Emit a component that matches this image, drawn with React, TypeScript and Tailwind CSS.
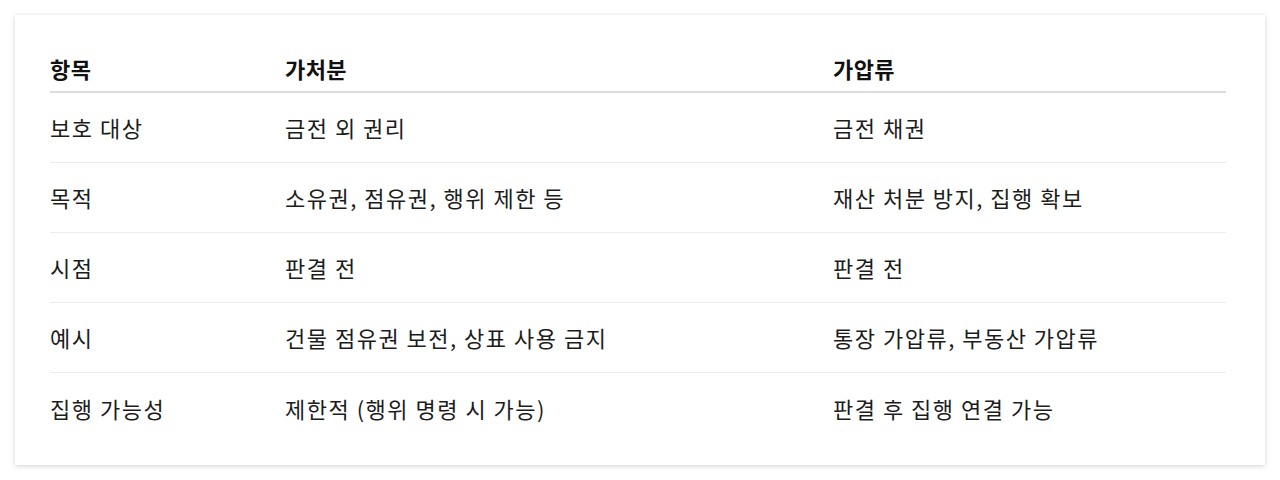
import React from 'react';

const rows = [
  ['보호 대상', '금전 외 권리', '금전 채권'],
  ['목적', '소유권, 점유권, 행위 제한 등', '재산 처분 방지, 집행 확보'],
  ['시점', '판결 전', '판결 전'],
  ['예시', '건물 점유권 보전, 상표 사용 금지', '통장 가압류, 부동산 가압류'],
  ['집행 가능성', '제한적 (행위 명령 시 가능)', '판결 후 집행 연결 가능'],
];

export default function App() {
  return (
    <div className="min-h-[480px] bg-white p-[15px] font-['Noto_Sans_CJK_KR','Noto_Sans',sans-serif]">
      <div className="w-[1250px] h-[450px] bg-white shadow-[0_1px_5px_rgba(0,0,0,0.18)] pl-[35px] pr-[39px] pt-[30px]">
        <div className="grid grid-cols-[235px_548px_1fr] h-[48px] items-center border-b-2 border-[#dcdcdc] text-[22px] tracking-[0.4px] font-bold text-[#111]">
          <div>항목</div>
          <div>가처분</div>
          <div>가압류</div>
        </div>
        {rows.map((r, i) => (
          <div
            key={i}
            className={
              'grid grid-cols-[235px_548px_1fr] h-[70px] items-center text-[22px] tracking-[1.5px] text-[#1c1c1c] ' +
              (i < rows.length - 1 ? 'border-b border-[#ececec]' : '')
            }
          >
            <div>{r[0]}</div>
            <div>{r[1]}</div>
            <div>{r[2]}</div>
          </div>
        ))}
      </div>
    </div>
  );
}
